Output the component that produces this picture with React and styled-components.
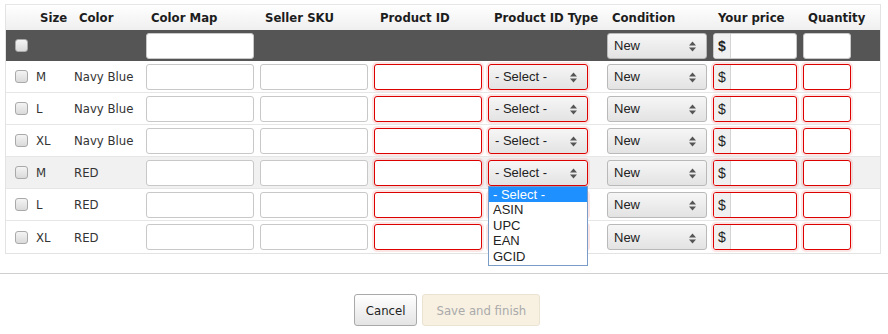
import React from "react";
import styled, { createGlobalStyle, css } from "styled-components";

const GlobalStyle = createGlobalStyle`
  html, body {
    margin: 0;
    padding: 0;
    background: #fff;
  }
  body {
    font-family: "DejaVu Sans Condensed", "DejaVu Sans", sans-serif;
    font-stretch: condensed;
    font-size: 13px;
    color: #333;
  }
`;

const COLS = "25px 38px 72px 114px 114px 114px 119px 106px 90px 54px 1fr";

const Page = styled.div`
  padding-top: 4px;
`;

const Table = styled.div`
  margin: 0 7px 0 5px;
  border: 1px solid #e3e3e3;
  border-top-color: #e6e6e6;
`;

const Row = styled.div`
  display: grid;
  grid-template-columns: ${COLS};
  align-items: center;
  height: ${(p) => p.$h || 32}px;
  box-sizing: border-box;
  background: ${(p) => p.$bg || "#fff"};
  ${(p) =>
    p.$line &&
    css`
      border-bottom: 1px solid #e6e6e6;
      &:last-child {
        border-bottom: none;
      }
    `}
`;

const HeaderRow = styled(Row)`
  background: linear-gradient(#ffffff, #efefef);
`;

const HeadCell = styled.div`
  padding-left: ${(p) => p.$pl ?? 10}px;
  font-weight: bold;
  color: #1d1d1d;
  white-space: nowrap;
`;

const Cell = styled.div`
  padding-left: ${(p) => p.$pl ?? 5}px;
  display: flex;
  align-items: center;
  white-space: nowrap;
  color: #333;
`;

const Check = styled.span`
  width: 13px;
  height: 13px;
  box-sizing: border-box;
  border: 1px solid #a9a9a9;
  border-radius: 3px;
  background: linear-gradient(#f4f4f4, #dadada);
  display: inline-block;
`;

const invalid = css`
  border-color: #dd0000;
  box-shadow: 0 0 0 2px rgba(230, 40, 40, 0.12);
`;

const TextInput = styled.div`
  width: ${(p) => p.$w || 108}px;
  height: 26px;
  box-sizing: border-box;
  border: 1px solid #c8c8c8;
  border-radius: 3px;
  background: #fff;
  ${(p) => p.$err && invalid}
`;

const SelectWrap = styled.div`
  position: relative;
`;

const SelectBox = styled.div`
  width: 100px;
  height: 26px;
  box-sizing: border-box;
  border: 1px solid #b9b9b9;
  border-radius: 3px;
  background: linear-gradient(#f6f6f6, #e3e3e3);
  display: flex;
  align-items: center;
  justify-content: space-between;
  padding: 0 10px 0 6px;
  font-family: "Liberation Sans", Arial, sans-serif;
  font-stretch: normal;
  font-size: 13px;
  color: #222;
  ${(p) => p.$err && invalid}
  svg {
    margin-top: 2px;
  }
`;

const PriceGroup = styled.div`
  width: 84px;
  height: 26px;
  box-sizing: border-box;
  border: 1px solid #c8c8c8;
  border-radius: 3px;
  background: #fff;
  display: flex;
  overflow: hidden;
  ${(p) => p.$err && invalid}
`;

const Addon = styled.span`
  width: 16px;
  flex: none;
  background: #f0f0f0;
  border-right: 1px solid #d4d4d4;
  display: flex;
  align-items: center;
  justify-content: center;
  font-family: "Liberation Sans", Arial, sans-serif;
  font-stretch: normal;
  font-size: 14px;
  font-weight: ${(p) => (p.$bold ? "bold" : "normal")};
  color: #222;
`;

const DropList = styled.ul`
  position: absolute;
  top: 100%;
  left: 0;
  width: 100px;
  box-sizing: border-box;
  margin: 0;
  padding: 0 0 1px;
  list-style: none;
  background: #fff;
  border: 1px solid #7a9cc6;
  z-index: 5;
  font-family: "Liberation Sans", Arial, sans-serif;
  font-stretch: normal;
  font-size: 13px;
  color: #222;
`;

const DropItem = styled.li`
  height: 15.5px;
  line-height: 15px;
  padding-left: 4px;
  ${(p) =>
    p.$active &&
    css`
      background: #1e90ff;
      color: #fff;
    `}
`;

const Footer = styled.div`
  margin-top: 19px;
  border-top: 1px solid #cfcfcf;
  padding-top: 20px;
  display: flex;
  justify-content: center;
  gap: 5px;
  padding-left: 6px;
`;

const Button = styled.button`
  height: 32px;
  box-sizing: border-box;
  border-radius: 3px;
  font-family: inherit;
  font-stretch: condensed;
  font-size: 13px;
  padding: 0 ${(p) => (p.$disabled ? 13 : 11)}px;
  border: 1px solid ${(p) => (p.$disabled ? "#ebe3d2" : "#a9a9a9")};
  background: ${(p) =>
    p.$disabled ? "#f8f1e2" : "linear-gradient(#ffffff, #e4e4e4)"};
  color: ${(p) => (p.$disabled ? "#aaa" : "#222")};
`;

const Arrows = () => (
  <svg width="7" height="11" viewBox="0 0 7 11">
    <path d="M0 4.5 L3.5 0.5 L7 4.5 Z" fill="#555" />
    <path d="M0 6.5 L3.5 10.5 L7 6.5 Z" fill="#555" />
  </svg>
);

const Select = ({ label, err, options }) => (
  <SelectWrap>
    <SelectBox $err={err}>
      <span>{label}</span>
      <Arrows />
    </SelectBox>
    {options && (
      <DropList>
        {options.map((o, j) => (
          <DropItem key={o} $active={j === 0}>
            {o}
          </DropItem>
        ))}
      </DropList>
    )}
  </SelectWrap>
);

const rows = [
  { size: "M", color: "Navy Blue" },
  { size: "L", color: "Navy Blue" },
  { size: "XL", color: "Navy Blue" },
  { size: "M", color: "RED", hover: true, open: true },
  { size: "L", color: "RED" },
  { size: "XL", color: "RED" },
];

const idTypes = ["- Select -", "ASIN", "UPC", "EAN", "GCID"];

export default function App() {
  return (
    <Page>
      <GlobalStyle />
      <Table>
        <HeaderRow $h={25}>
          <HeadCell />
          <HeadCell $pl={9}>Size</HeadCell>
          <HeadCell>Color</HeadCell>
          <HeadCell>Color Map</HeadCell>
          <HeadCell>Seller SKU</HeadCell>
          <HeadCell $pl={11}>Product ID</HeadCell>
          <HeadCell $pl={11}>Product ID Type</HeadCell>
          <HeadCell>Condition</HeadCell>
          <HeadCell>Your price</HeadCell>
          <HeadCell>Quantity</HeadCell>
          <HeadCell />
        </HeaderRow>
        <Row $h={31} $bg="#555555">
          <Cell $pl={9}>
            <Check />
          </Cell>
          <Cell />
          <Cell />
          <Cell>
            <TextInput />
          </Cell>
          <Cell />
          <Cell />
          <Cell />
          <Cell>
            <Select label="New" />
          </Cell>
          <Cell>
            <PriceGroup>
              <Addon $bold>$</Addon>
            </PriceGroup>
          </Cell>
          <Cell>
            <TextInput $w={48} />
          </Cell>
          <Cell />
        </Row>
        <div>
          {rows.map((r, i) => (
            <Row key={i} $line $bg={r.hover ? "#f1f1f1" : "#fff"}>
              <Cell $pl={9}>
                <Check />
              </Cell>
              <Cell>{r.size}</Cell>
              <Cell>{r.color}</Cell>
              <Cell>
                <TextInput />
              </Cell>
              <Cell>
                <TextInput />
              </Cell>
              <Cell>
                <TextInput $err />
              </Cell>
              <Cell>
                <Select
                  label="- Select -"
                  err
                  options={r.open ? idTypes : null}
                />
              </Cell>
              <Cell>
                <Select label="New" />
              </Cell>
              <Cell>
                <PriceGroup $err>
                  <Addon>$</Addon>
                </PriceGroup>
              </Cell>
              <Cell>
                <TextInput $w={48} $err />
              </Cell>
              <Cell />
            </Row>
          ))}
        </div>
      </Table>
      <Footer>
        <Button>Cancel</Button>
        <Button $disabled>Save and finish</Button>
      </Footer>
    </Page>
  );
}
